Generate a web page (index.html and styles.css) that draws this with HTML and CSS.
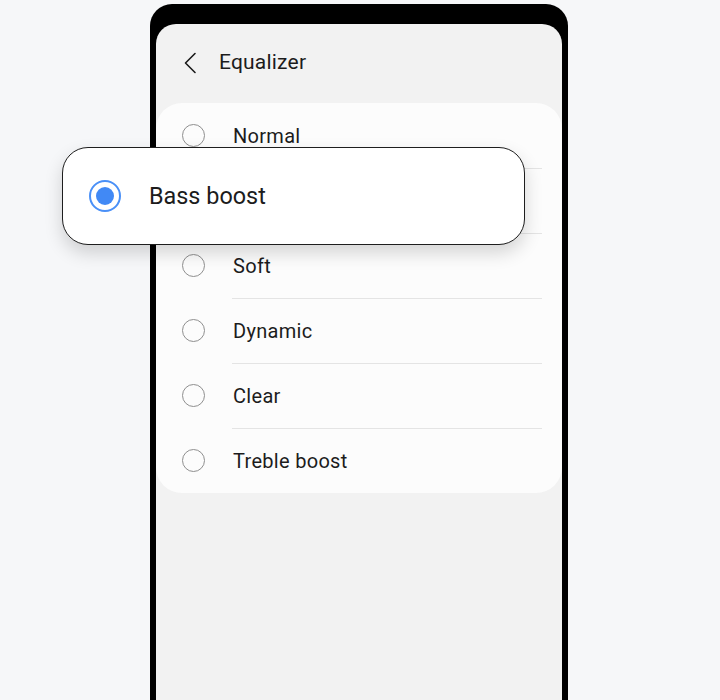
FILE: index.html
```html
<!DOCTYPE html>
<html>
<head>
<meta charset="utf-8">
<link rel="stylesheet" href="styles.css">
</head>
<body>
<div class="stage">
  <div class="phone">
    <div class="screen">
      <div class="header">
        <svg class="back" width="14" height="22" viewBox="0 0 14 22"><path d="M11 1.5 L1.5 11 L11 20.5" fill="none" stroke="#1c1c1c" stroke-width="1.6" stroke-linecap="round" stroke-linejoin="round"/></svg>
        <span class="title">Equalizer</span>
      </div>
      <div class="card">
        <div class="row"><span class="radio"></span><span class="label">Normal</span></div>
        <div class="row"><span class="radio"></span><span class="label covered">Bass boost</span></div>
        <div class="row"><span class="radio"></span><span class="label">Soft</span></div>
        <div class="row"><span class="radio"></span><span class="label">Dynamic</span></div>
        <div class="row"><span class="radio"></span><span class="label">Clear</span></div>
        <div class="row"><span class="radio"></span><span class="label">Treble boost</span></div>
      </div>
    </div>
  </div>
  <div class="popup">
    <span class="radio-on"><span class="dot"></span></span>
    <span class="popup-label">Bass boost</span>
  </div>
</div>
</body>
</html>
```

FILE: styles.css
```css
html, body {
  margin: 0;
  padding: 0;
  background: #f6f7f9;
  font-family: Roboto, "Noto Sans", sans-serif;
  color: #1c1c1c;
  overflow: hidden;
}
.stage {
  position: relative;
  width: 720px;
  height: 700px;
  padding-top: 4px;
  box-sizing: border-box;
}
.phone {
  margin-left: 150px;
  width: 406px;
  height: 720px;
  background: #000;
  border-radius: 22px 22px 0 0;
  padding: 20px 6px 0 6px;
}
.screen {
  background: #f2f2f2;
  border-radius: 20px 20px 0 0;
  height: 100%;
  overflow: hidden;
}
.header {
  height: 79px;
  display: flex;
  align-items: center;
  padding-left: 28px;
  padding-bottom: 3px;
  box-sizing: border-box;
}
.back {
  display: block;
  margin-top: 1px;
}
.title {
  margin-left: 21px;
  font-size: 21px;
  letter-spacing: 0.2px;
}
.card {
  background: #fcfcfc;
  border-radius: 26px;
}
.row {
  height: 65px;
  display: flex;
  align-items: center;
  position: relative;
}
.row + .row::before {
  content: "";
  position: absolute;
  top: 0;
  left: 76px;
  right: 20px;
  height: 1px;
  background: #e4e4e4;
}
.radio {
  width: 21px;
  height: 21px;
  border: 1.5px solid #8f8f8f;
  border-radius: 50%;
  margin-left: 26px;
}
.label {
  margin-left: 28px;
  font-size: 20px;
  letter-spacing: 0.3px;
}
.covered {
  visibility: hidden;
}
.popup {
  position: absolute;
  left: 62px;
  top: 147px;
  width: 461px;
  height: 96px;
  background: #fff;
  border: 1px solid #1e1e1e;
  border-radius: 26px;
  box-shadow: 0 8px 18px rgba(0, 0, 0, 0.16);
  display: flex;
  align-items: center;
}
.radio-on {
  width: 28px;
  height: 28px;
  border: 2px solid #4a90f7;
  border-radius: 50%;
  margin-left: 26px;
  display: flex;
  align-items: center;
  justify-content: center;
}
.dot {
  width: 18px;
  height: 18px;
  border-radius: 50%;
  background: #4189f5;
}
.popup-label {
  margin-left: 28px;
  font-size: 23.4px;
}
```
